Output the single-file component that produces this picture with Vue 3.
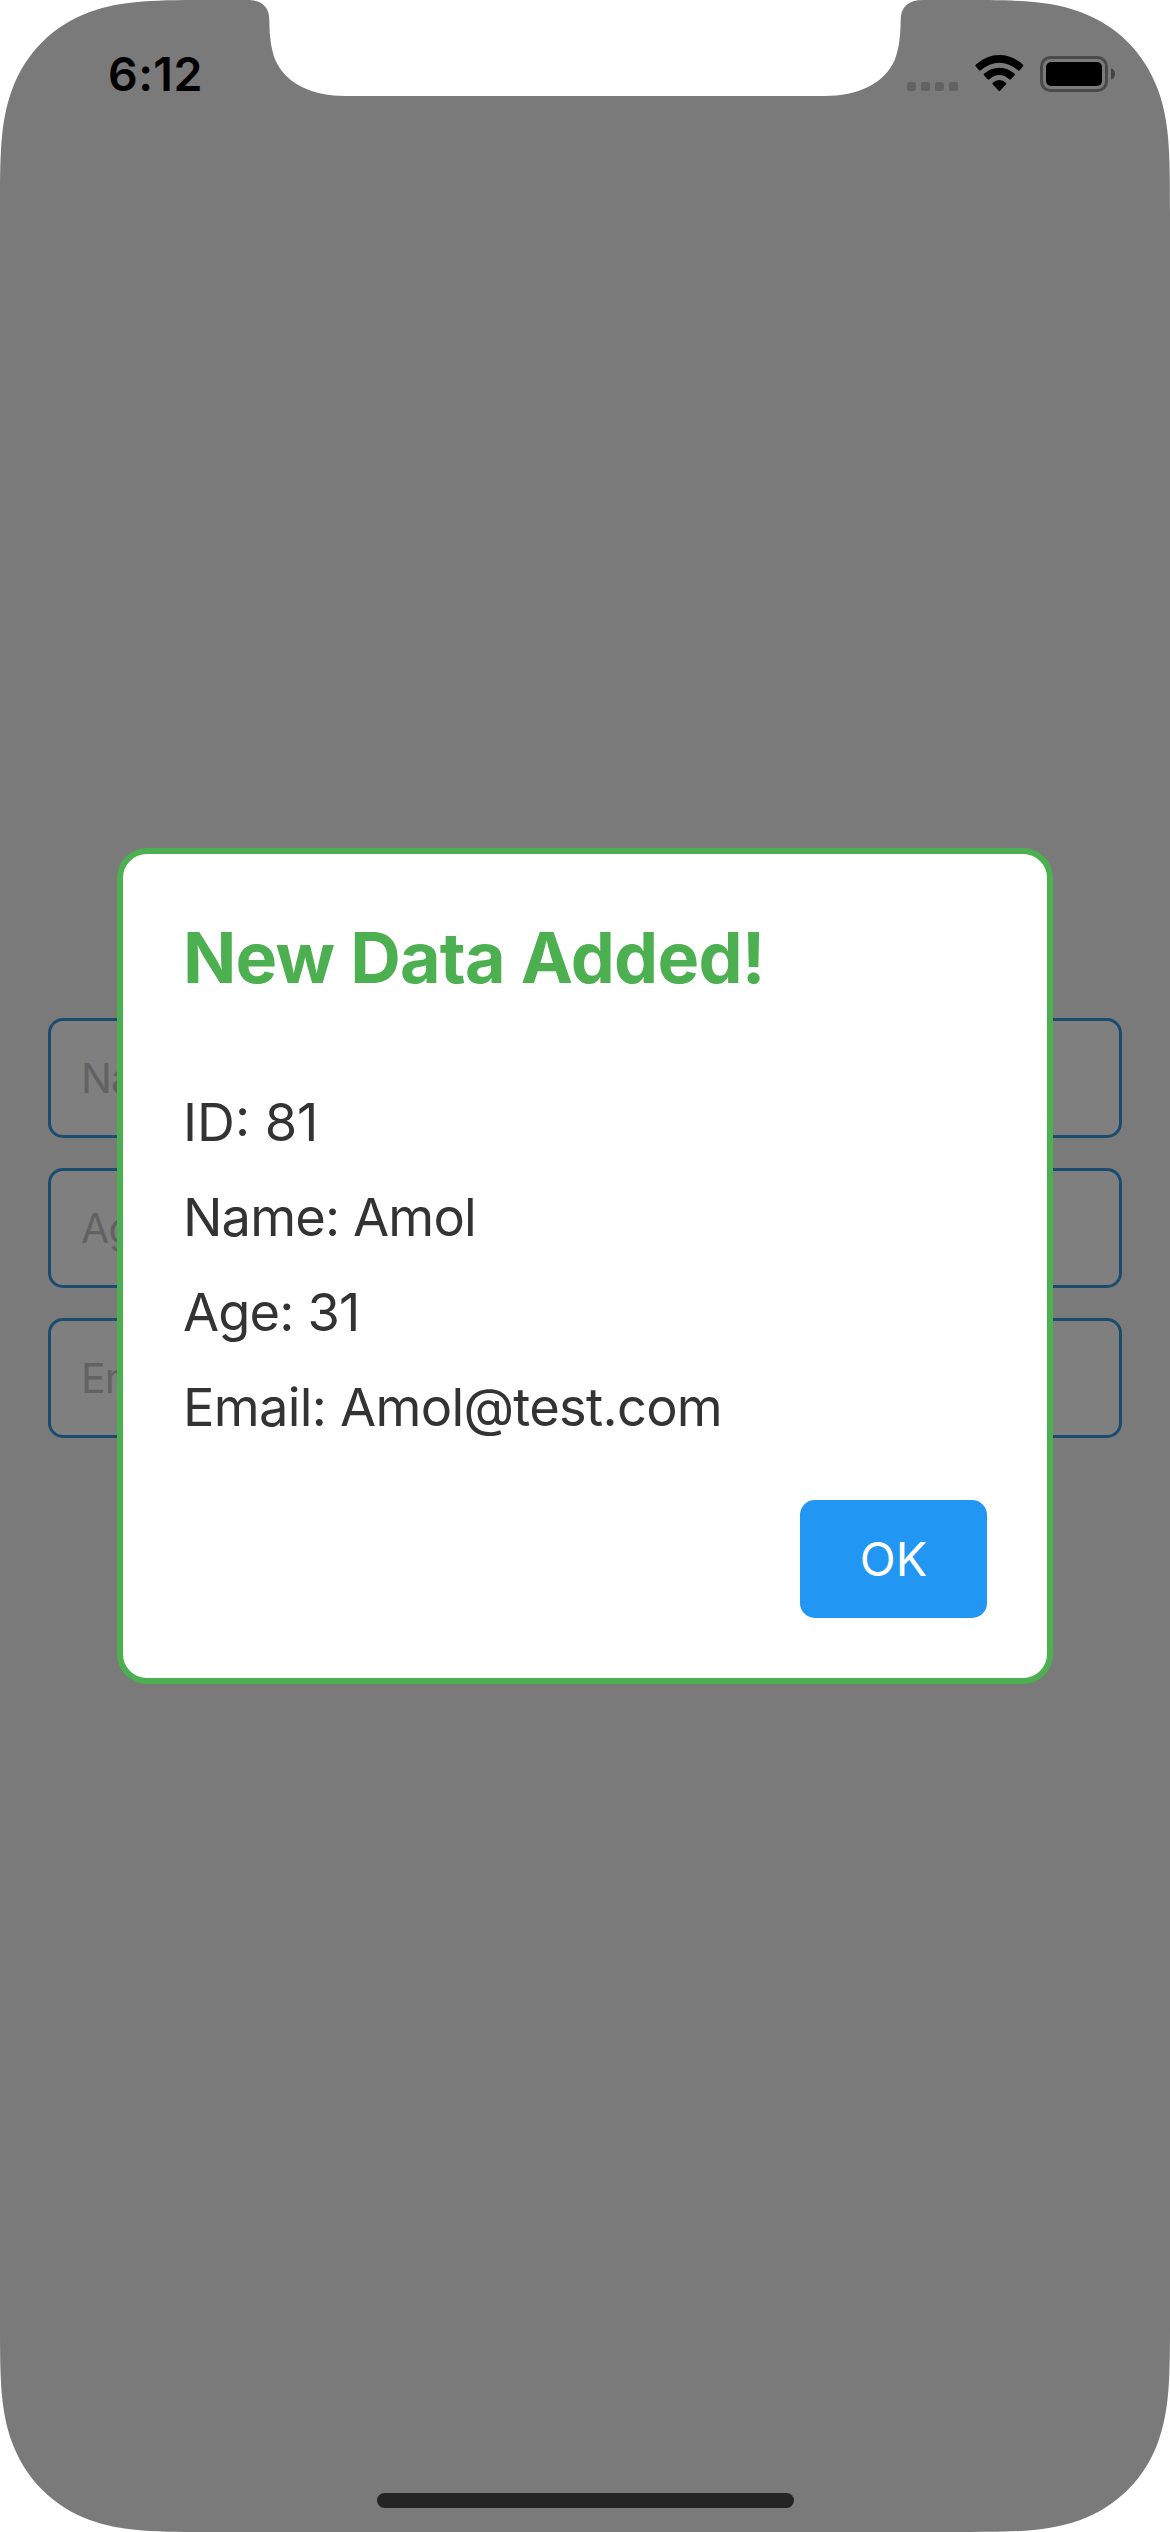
<script setup>
const fields = ['Name', 'Age', 'Email']

const rows = [
  { key: 'id', label: 'ID', value: '81' },
  { key: 'name', label: 'Name', value: 'Amol' },
  { key: 'age', label: 'Age', value: '31' },
  { key: 'email', label: 'Email', value: 'Amol@test.com' },
]

// Quarter outline of a continuous-curvature screen corner, drawn at the top left.
const corner =
  'M0 0H217C154.5 0 123.3 0 89.7 12C53 25.5 25.5 53 12 89.7C0 123.3 0 154.5 0 217Z'
const corners = [
  '',
  'translate(1170 0) scale(-1 1)',
  'translate(0 2532) scale(1 -1)',
  'translate(1170 2532) scale(-1 -1)',
]
</script>

<template>
  <div class="screen">
    <header class="status">
      <span class="time">6:12</span>
      <div class="indicators">
        <div class="signal"><i v-for="n in 4" :key="n"></i></div>
        <svg class="wifi" viewBox="0 0 146 108">
          <path d="M2 29Q0 31 2 34L12 46Q14 48 17 46Q43 23 73 23Q103 23 129 46Q132 48 134 46L144 34Q146 31 144 29Q112 0 73 0Q34 0 2 29Z" />
          <path d="M27 56Q25 59 27 61L38 73Q40 75 43 73Q57 60 73 60Q89 60 103 73Q106 75 108 73L119 61Q121 59 119 56Q99 38 73 38Q47 38 27 56Z" />
          <path d="M53 83Q51 86 53 88L71 107Q73 109 75 107L93 88Q95 86 93 83Q84 75 73 75Q62 75 53 83Z" />
        </svg>
        <svg class="battery" viewBox="0 0 75 36">
          <rect class="shell" x="1.5" y="1.5" width="65" height="33" rx="9" />
          <rect x="6" y="6" width="56" height="24" rx="5" />
          <path class="cap" d="M71 12.3Q75 14 75 18Q75 22 71 23.7Z" />
        </svg>
      </div>
    </header>

    <main class="form">
      <div v-for="f in fields" :key="f" class="field">{{ f }}</div>
    </main>

    <div class="backdrop">
      <section class="dialog">
        <h1>New Data Added!</h1>
        <ul>
          <li v-for="r in rows" :key="r.key" :class="r.key">{{ r.label }}: {{ r.value }}</li>
        </ul>
        <button type="button">OK</button>
      </section>
      <div class="home"></div>
    </div>

    <svg class="bezel" viewBox="0 0 1170 2532">
      <path v-for="t in corners" :key="t" :d="corner" :transform="t" />
      <path
        d="M247 0C262 0 269.3 7 269.3 20C269.5 36 271 49 275.3 60C286 84 312 96 346 96H824C858 96 884 84 894.7 60C899 49 900.5 36 900.7 20C900.7 7 908 0 923 0Z"
      />
    </svg>
  </div>
</template>

<style>
body {
  margin: 0;
  background: #fff;
}
</style>

<style scoped>
.screen {
  position: relative;
  width: 1170px;
  height: 2532px;
  overflow: hidden;
  background: #f5f5f5;
  font-family: Inter, "Liberation Sans", sans-serif;
  box-sizing: border-box;
}

.status {
  position: relative;
  z-index: 2;
  display: flex;
  justify-content: space-between;
  height: 141px;
  padding: 0 55px 0 108px;
  box-sizing: border-box;
}

.time {
  padding-top: 46px;
  font-size: 46.5px;
  line-height: 56px;
  font-weight: 600;
  letter-spacing: 0.4px;
  color: #000;
}

.indicators {
  display: flex;
  align-items: flex-start;
  padding-top: 55px;
}

.signal {
  display: flex;
  gap: 5px;
  margin: 27px 17px 0 0;
}

.signal i {
  width: 9px;
  height: 9px;
  border-radius: 2.5px;
  background: #626262;
}

.wifi {
  width: 48.7px;
  height: 36px;
  margin-right: 16.3px;
}

.battery {
  width: 75px;
  height: 36px;
  margin-top: 1px;
}

.shell {
  fill: none;
  stroke: #4a4a4a;
  stroke-width: 3;
}

.cap {
  fill: #444;
}

.form {
  display: flex;
  flex-direction: column;
  gap: 30px;
  padding: 877px 48px 0;
}

.field {
  height: 120px;
  box-sizing: border-box;
  padding: 0 30px;
  border: 3px solid #3498db;
  border-radius: 15px;
  background: #fff;
  color: #c5c5c7;
  font-size: 41px;
  line-height: 114px;
  letter-spacing: -0.8px;
}

.backdrop {
  position: absolute;
  inset: 0;
  display: flex;
  align-items: center;
  justify-content: center;
  background: rgba(0, 0, 0, 0.5);
}

.dialog {
  display: flex;
  flex-direction: column;
  width: 936px;
  box-sizing: border-box;
  padding: 60px;
  border: 6px solid #4caf50;
  border-radius: 30px;
  background: #fff;
}

h1 {
  margin: 0 0 90px;
  font-size: 70px;
  line-height: 87px;
  height: 86px;
  font-weight: 700;
  letter-spacing: -0.75px;
  color: #4caf50;
}

ul {
  display: flex;
  flex-direction: column;
  gap: 30px;
  margin: 0 0 60px;
  padding: 0;
  list-style: none;
  font-size: 52.4px;
  line-height: 65px;
  letter-spacing: -0.85px;
  color: #333;
}

.id {
  letter-spacing: 0;
}

.email {
  letter-spacing: -0.7px;
}

button {
  align-self: flex-end;
  width: 187px;
  height: 118px;
  padding: 0;
  border: 0;
  border-radius: 15px;
  background: #2196f3;
  color: #fff;
  font-family: inherit;
  font-size: 47px;
  line-height: 58px;
}

.home {
  position: absolute;
  bottom: 24px;
  left: 377px;
  width: 417px;
  height: 15px;
  border-radius: 8px;
  background: #242424;
}

.bezel {
  position: absolute;
  inset: 0;
  z-index: 3;
  width: 1170px;
  height: 2532px;
  fill: #fff;
  pointer-events: none;
}
</style>
